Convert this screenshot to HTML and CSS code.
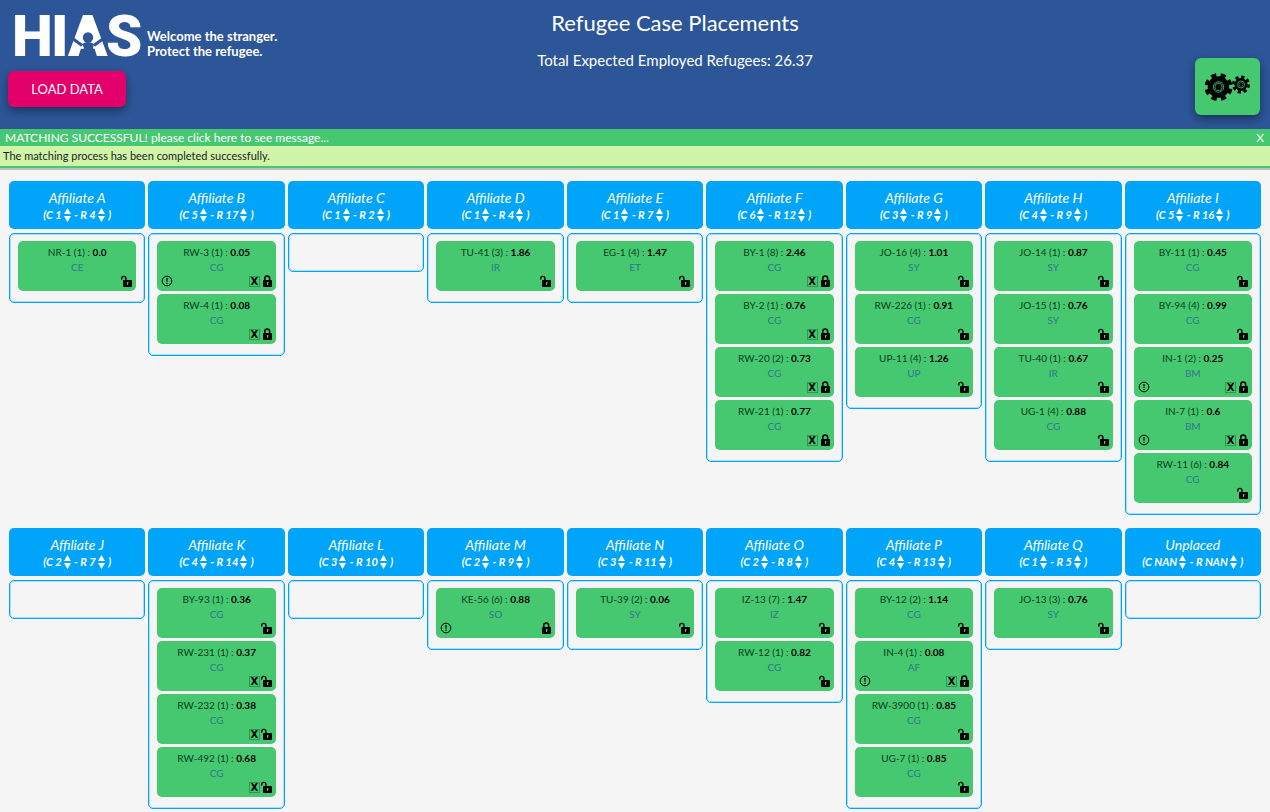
FILE: index.html
```html
<!DOCTYPE html>
<html lang="en">
<head>
<meta charset="utf-8">
<title>Refugee Case Placements</title>
<link rel="stylesheet" href="styles.css">
</head>
<body>
<svg class="sprite" aria-hidden="true">
  <symbol id="lock" viewBox="0 0 12 12"><path fill-rule="evenodd" d="M4 5V3.500a3.200 3.200 0 0 1 6.400 0V5h.6q1 0 1 1v5q0 1-1 1H4q-1 0-1-1V6q0-1 1-1zM5.500 5h3.400V3.500a1.700 1.700 0 0 0-3.400 0z"/><path class="keyhole" d="M7 7h1.500v1.500H8V10H7z"/></symbol>
  <symbol id="unlock" viewBox="0 0 12 12"><path d="M1 4V3.500a2.800 2.800 0 0 1 5.600 0V5H11q1 0 1 1v5q0 1-1 1H4q-1 0-1-1V6q0-1 1-1h1.200V3.500a1.400 1.400 0 0 0-2.800 0V4q0 .7-.7.7T1 4z"/><path class="keyhole" d="M7 7h1.500v1.500H8V10H7z"/></symbol>
  <symbol id="alert" viewBox="0 0 12 12"><circle cx="6" cy="6" r="4.800" fill="none" stroke="#000"/><path d="M5.300 3h1.400l-.3 4h-.8zM5.400 7.800h1.200V9H5.400z"/></symbol>
  <symbol id="arrows" viewBox="0 0 7 14"><path d="M3.500 0 7 6H0zM0 8h7l-3.500 6z"/></symbol>
</svg>
<header class="top">
  <div class="brand">
    <div class="logo">
      <svg class="logo-mark" width="130" height="46" viewBox="0 0 130 46" role="img" aria-label="HIAS">
        <text class="logo-text" y="44" x="0 39 56 94">HIAS</text>
        <path class="logo-fill" d="M76 6l-9 29h18z"/>
        <path class="logo-arms" d="M60 26l10 7.500M92 26l-10 7.500"/>
        <circle class="logo-figure" cx="76" cy="25.500" r="5.200"/>
        <path class="logo-figure" d="M70 32q6-4 12 0l-1 4 3 9H69l3-9z"/>
      </svg>
      <p class="tagline">Welcome the stranger.<br>Protect the refugee.</p>
    </div>
    <button class="btn load" type="button">LOAD DATA</button>
  </div>
  <div class="titles">
    <h1>Refugee Case Placements</h1>
    <p>Total Expected Employed Refugees: 26.37</p>
  </div>
  <div class="tools">
    <button class="btn gears" type="button" aria-label="Run matching">
      <svg width="47" height="30" viewBox="0 0 47 30">
        <g transform="translate(14.500 15) rotate(8)"><circle class="gear-big" r="12"/><circle r="10.800"/><circle class="ring" r="5.200"/><circle class="ring" r="3.600"/></g>
        <g transform="translate(37 12.500)"><circle class="gear-small" r="7.500"/><circle r="6.500"/><circle class="ring" r="3.500"/><circle class="ring thin" r="1.800"/></g>
      </svg>
    </button>
  </div>
</header>
<section class="notice">
  <div class="notice-head">
    <button type="button">MATCHING SUCCESSFUL! please click here to see message...</button>
    <button type="button" aria-label="Close">X</button>
  </div>
  <p>The matching process has been completed successfully.</p>
</section>
<main class="board" id="board"></main>
<script src="board.js"></script>
</body>
</html>
```
FILE: styles.css
```css
* { box-sizing: border-box; }
body { margin: 0; background: #f5f5f5; color: #000; font-family: Lato, "Open Sans", sans-serif; }
h1, h2, p { margin: 0; font-weight: 400; }
button { border: 0; padding: 0; background: none; color: inherit; font: inherit; cursor: pointer; }
svg { display: block; }
.sprite { position: absolute; width: 0; height: 0; }
.keyhole { fill: #46c870; }

.top { display: grid; grid-template-columns: 275px 1fr 195px; min-height: 129px; background: #2c5697; color: #fff; }
.brand { padding: 12px 0 0 8px; }
.logo { display: flex; gap: 5px; padding-left: 4px; height: 59px; }
.logo-mark { flex: none; overflow: visible; }
.logo-text { font: 900 58px Roboto, sans-serif; fill: #fff; }
.logo-fill { fill: #fff; }
.logo-figure { fill: #2c5697; }
.logo-arms { fill: none; stroke: #2c5697; stroke-width: 3; }
.tagline { padding-top: 17px; font-size: 13px; font-weight: 700; line-height: 15px; white-space: nowrap; }
.btn { border-radius: 6px; box-shadow: 0 4px 8px rgba(0, 0, 0, .4); }
.load { display: block; width: 118px; height: 36px; background: #e3006b; font-size: 13px; }
.titles { padding-top: 9px; text-align: center; }
.titles h1 { font-size: 22px; line-height: 28px; }
.titles p { margin-top: 13px; font-size: 15px; line-height: 20px; }
.tools { display: flex; justify-content: flex-end; align-items: flex-start; padding: 58px 10px 0 0; }
.gears { display: flex; justify-content: center; align-items: center; width: 65px; height: 57px; background: #46c870; }
.gear-big, .gear-small { fill: none; stroke: #000; stroke-width: 4; stroke-dasharray: 5.200 4.225; }
.gear-small { stroke-width: 3; stroke-dasharray: 3.200 2.690; }
.ring { fill: none; stroke: #46c870; stroke-width: .8; }
.thin { stroke-width: .5; }

.notice { border-bottom: 2px solid #46c870; background: #d0f4a8; box-shadow: 0 2px 0 #c0c0c0; }
.notice-head { display: flex; justify-content: space-between; padding: 1px 6px 0 5px; background: #46c870; color: #fff; font-size: 12px; line-height: 16px; }
.notice p { padding: 0 3px; color: #222; font-size: 11px; line-height: 20px; }

.board { display: grid; grid-template-columns: repeat(9, 1fr); gap: 13px 3px; align-items: start; padding: 13px 9px 3px; }
.column { display: grid; gap: 4px; }
.column-head { padding: 8px 0 7px; border-radius: 5px; background: #00a4f8; color: #fff; text-align: center; font-style: italic; }
.column-head h2 { font-size: 14px; line-height: 18px; }
.limits { display: flex; justify-content: center; align-items: center; gap: 1px; font-size: 11px; font-weight: 700; line-height: 15px; white-space: pre; }
.limits button { padding-left: 1px; }
.limits svg { width: 7px; height: 14px; fill: #fff; }
.slot { display: grid; gap: 3px; min-height: 39px; padding: 7px 8px 11px; border: 1px solid #00a4f8; border-radius: 5px; box-shadow: inset 0 0 0 1px rgba(0, 164, 248, .3); }
.case { display: grid; height: 50px; padding: 4px; border-radius: 5px; background: #46c870; color: #0a3d1c; text-align: center; font-size: 10px; line-height: 15px; }
.case b { color: #000; font-weight: 700; }
.case .origin { color: #2c7a86; }
.actions { display: flex; align-items: center; height: 12px; color: #000; }
.actions svg { width: 12px; height: 12px; }
.spacer { flex: 1; }
.remove { width: 11px; height: 11px; border: 1px solid #2f9455; font: 700 10px/9px "DejaVu Sans", sans-serif; }
```
FILE: board.js
```js
// Each case: label, score, origin, flags (L locked, X removable, ! has warning)
const columns = [
  ["Affiliate A", "1", "4", ["NR-1 (1)|0.0|CE|"]],
  ["Affiliate B", "5", "17", ["RW-3 (1)|0.05|CG|LX!", "RW-4 (1)|0.08|CG|LX"]],
  ["Affiliate C", "1", "2", []],
  ["Affiliate D", "1", "4", ["TU-41 (3)|1.86|IR|"]],
  ["Affiliate E", "1", "7", ["EG-1 (4)|1.47|ET|"]],
  ["Affiliate F", "6", "12", ["BY-1 (8)|2.46|CG|LX", "BY-2 (1)|0.76|CG|LX", "RW-20 (2)|0.73|CG|LX", "RW-21 (1)|0.77|CG|LX"]],
  ["Affiliate G", "3", "9", ["JO-16 (4)|1.01|SY|", "RW-226 (1)|0.91|CG|", "UP-11 (4)|1.26|UP|"]],
  ["Affiliate H", "4", "9", ["JO-14 (1)|0.87|SY|", "JO-15 (1)|0.76|SY|", "TU-40 (1)|0.67|IR|", "UG-1 (4)|0.88|CG|"]],
  ["Affiliate I", "5", "16", ["BY-11 (1)|0.45|CG|", "BY-94 (4)|0.99|CG|", "IN-1 (2)|0.25|BM|LX!", "IN-7 (1)|0.6|BM|LX!", "RW-11 (6)|0.84|CG|"]],
  ["Affiliate J", "2", "7", []],
  ["Affiliate K", "4", "14", ["BY-93 (1)|0.36|CG|", "RW-231 (1)|0.37|CG|X", "RW-232 (1)|0.38|CG|X", "RW-492 (1)|0.68|CG|X"]],
  ["Affiliate L", "3", "10", []],
  ["Affiliate M", "2", "9", ["KE-56 (6)|0.88|SO|L!"]],
  ["Affiliate N", "3", "11", ["TU-39 (2)|0.06|SY|"]],
  ["Affiliate O", "2", "8", ["IZ-13 (7)|1.47|IZ|", "RW-12 (1)|0.82|CG|"]],
  ["Affiliate P", "4", "13", ["BY-12 (2)|1.14|CG|", "IN-4 (1)|0.08|AF|LX!", "RW-3900 (1)|0.85|CG|", "UG-7 (1)|0.85|CG|"]],
  ["Affiliate Q", "1", "5", ["JO-13 (3)|0.76|SY|"]],
  ["Unplaced", "NAN", "NAN", []],
];

const icon = (name) => `<svg aria-hidden="true"><use href="#${name}"/></svg>`;
const stepper = (label) => `<button type="button" aria-label="${label}">${icon("arrows")}</button>`;

function caseCard(entry) {
  const [label, score, origin, flags] = entry.split("|");
  const has = (flag) => flags.includes(flag);
  return `<article class="case">
    <div>${label} : <b>${score}</b></div>
    <div class="origin">${origin}</div>
    <div class="actions">
      ${has("!") ? icon("alert") : ""}<span class="spacer"></span>
      ${has("X") ? '<button class="remove" type="button">X</button>' : ""}
      <button type="button" aria-label="${has("L") ? "Unlock" : "Lock"}">${icon(has("L") ? "lock" : "unlock")}</button>
    </div>
  </article>`;
}

document.getElementById("board").innerHTML = columns.map(([name, cases, refugees, entries]) => `
  <section class="column">
    <div class="column-head">
      <h2>${name}</h2>
      <div class="limits"><span>(C ${cases}</span>${stepper("Change cases")}<span> - R ${refugees}</span>${stepper("Change refugees")}<span> )</span></div>
    </div>
    <div class="slot">${entries.map(caseCard).join("")}</div>
  </section>`).join("");
```
